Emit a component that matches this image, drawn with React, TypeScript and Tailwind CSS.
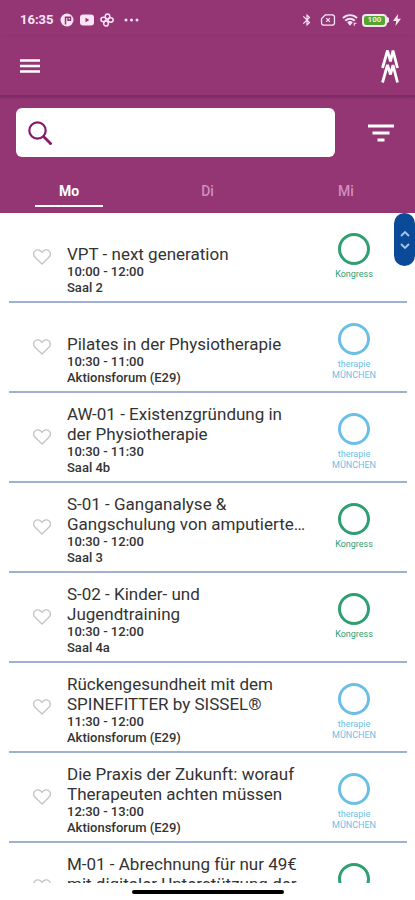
import { useState } from 'react';
import { clsx } from 'clsx';
import { MdBluetooth } from 'react-icons/md';

type Category = 'kongress' | 'therapie';

interface Session {
  title: string;
  time: string;
  room: string;
  category: Category;
}

const days = ['Mo', 'Di', 'Mi'];

const sessions: Session[] = [
  { title: 'VPT - next generation', time: '10:00 - 12:00', room: 'Saal 2', category: 'kongress' },
  { title: 'Pilates in der Physiotherapie', time: '10:30 - 11:00', room: 'Aktionsforum (E29)', category: 'therapie' },
  { title: 'AW-01 - Existenzgründung in der Physiotherapie', time: '10:30 - 11:30', room: 'Saal 4b', category: 'therapie' },
  { title: 'S-01 - Ganganalyse & Gangschulung von amputierte…', time: '10:30 - 12:00', room: 'Saal 3', category: 'kongress' },
  { title: 'S-02 - Kinder- und Jugendtraining', time: '10:30 - 12:00', room: 'Saal 4a', category: 'kongress' },
  { title: 'Rückengesundheit mit dem SPINEFITTER by SISSEL®', time: '11:30 - 12:00', room: 'Aktionsforum (E29)', category: 'therapie' },
  { title: 'Die Praxis der Zukunft: worauf Therapeuten achten müssen', time: '12:30 - 13:00', room: 'Aktionsforum (E29)', category: 'therapie' },
  { title: 'M-01 - Abrechnung für nur 49€ mit digitaler Unterstützung der', time: '12:30 - 13:00', room: 'Saal 1', category: 'kongress' },
];

function StatusBar() {
  return (
    <div className="flex h-9 items-center justify-between pt-1 pr-3.5 pl-5 text-[#fbe4f6]">
      <div className="flex items-center gap-1.5">
        <span className="text-[13px] font-bold">16:35</span>
        <svg viewBox="0 0 14 14" className="size-3.5">
          <circle cx="7" cy="7" r="6.5" fill="currentColor" />
          <path d="M5.500 11.500V4.300h2M8 4.300h2.500v3H8z" fill="none" stroke="#943574" strokeWidth="1.5" />
        </svg>
        <svg viewBox="0 0 14 12" className="h-3 w-3.5">
          <rect y="0.5" width="14" height="11" rx="3" fill="currentColor" />
          <path d="M5.5 3.8v4.4L9.3 6z" fill="#943574" />
        </svg>
        <svg viewBox="0 0 14 14" className="size-3.5" fill="none" stroke="currentColor" strokeWidth="1.5">
          <ellipse cx="7.500" cy="3.500" rx="2.300" ry="2.600" />
          <ellipse cx="10.600" cy="7" rx="2.600" ry="2.200" />
          <ellipse cx="3.500" cy="6.500" rx="2.600" ry="2.200" />
          <ellipse cx="6" cy="10.500" rx="2.300" ry="2.600" />
        </svg>
        <svg viewBox="0 0 16 4" className="ml-1 h-1 w-4" fill="currentColor">
          <circle cx="2" cy="2" r="1.500" />
          <circle cx="7.500" cy="2" r="1.500" />
          <circle cx="13" cy="2" r="1.500" />
        </svg>
      </div>

      <div className="flex items-center gap-1">
        <MdBluetooth className="mr-0.5 size-3.5" />
        <svg viewBox="0 0 16 13" className="mr-0.5 h-3 w-4" fill="none" stroke="currentColor" strokeWidth="1.4">
          <path d="M5 1h8.500L15 2.500v8L13.500 12h-11L1 10.500V5z" strokeLinejoin="round" />
          <path d="M6 4.500l4 4M10 4.500l-4 4" />
        </svg>
        <svg viewBox="0 0 17 14" className="h-3.5 w-4" fill="none" stroke="currentColor" strokeWidth="2">
          <path d="M1 5a10.500 10.500 0 0 1 15 0M3.500 7.800a7 7 0 0 1 10 0" />
          <path d="M5.500 9.500a4.300 4.300 0 0 1 6 0L8.500 13z" fill="currentColor" stroke="none" />
          <path d="M13 13v-2.500h2.500" strokeWidth="1.200" />
        </svg>
        <div className="flex items-center">
          <span className="flex h-[13px] w-[25px] items-center justify-center rounded border-2 border-[#fbe4f6] bg-[#55a630] text-[8px] leading-none font-bold">
            100
          </span>
          <span className="h-1.5 w-0.5 rounded-r-sm bg-[#fbe4f6]" />
        </div>
        <svg viewBox="0 0 8 12" className="h-3 w-2" fill="currentColor">
          <path d="M5 0L0 7h3.200L2.500 12 8 4.800H4.600z" />
        </svg>
      </div>
    </div>
  );
}

function Logo() {
  return (
    <svg viewBox="0 0 20 36" className="h-9 w-5" fill="none" stroke="white" strokeLinejoin="bevel">
      <path d="M2.500 20L7.500 2.500l3 11L13 2.500l4.500 17.500" strokeWidth="2.800" />
      <path d="M2.500 34.500L7.500 17l3 9.500L13 17l4.500 17.500" strokeWidth="2.800" />
    </svg>
  );
}

function SessionRow({ session }: { session: Session }) {
  const isKongress = session.category === 'kongress';

  return (
    <li className="flex h-[90px] border-b-2 border-[#9fb0d2]">
      <button type="button" aria-label="Merken" className="flex w-[58px] shrink-0 items-center pl-6 text-[#c4c4c4]">
        <svg viewBox="0 0 18 16" className="h-4 w-[18px]" fill="none" stroke="currentColor" strokeWidth="1.300">
          <path d="M9 15L2.600 8.800C.3 6.500.3 3.700 1.800 2.100 3.600.3 6.800.4 9 3.300c2.200-2.900 5.400-3 7.200-1.200 1.500 1.600 1.500 4.400-.8 6.700z" />
        </svg>
      </button>

      <div className="flex min-w-0 flex-1 flex-col justify-end pb-[5px] text-[#333]">
        <h2 className="line-clamp-2 text-[17px] leading-5">{session.title}</h2>
        <p className="text-[13px] leading-4 font-medium">{session.time}</p>
        <p className="text-[13px] leading-4 font-medium">{session.room}</p>
      </div>

      <div
        className={clsx(
          'ml-4 flex w-[60px] shrink-0 flex-col items-center pt-5 text-center text-[9px] leading-[11px]',
          isKongress ? 'text-[#2f9e70]' : 'text-[#6bbfe6]'
        )}
      >
        <span className="mb-1 size-8 shrink-0 rounded-full border-3 border-current" />
        {isKongress ? 'Kongress' : 'therapie MÜNCHEN'}
      </div>
      <div className="w-[23px] shrink-0" />
    </li>
  );
}

export default function App() {
  const [activeDay, setActiveDay] = useState('Mo');

  return (
    <div className="flex h-screen flex-col bg-white font-['Roboto',sans-serif]">
      <header className="bg-[#943574] text-white">
        <StatusBar />
        <div className="flex h-[61px] items-center justify-between border-b-2 border-[#7f2b64] pr-[15px] pl-5 shadow-sm">
          <button type="button" aria-label="Menü">
            <svg viewBox="0 0 20 16" className="h-4 w-5" fill="none" stroke="currentColor" strokeWidth="2.500">
              <path d="M0 2.500h20M0 8h20M0 13.500h20" />
            </svg>
          </button>
          <Logo />
        </div>

        <div className="flex items-center gap-8 pt-[11px] pr-5 pl-4">
          <label className="flex h-[49px] flex-1 items-center rounded-md bg-white pl-3 text-[#8a1a6a]">
            <svg viewBox="0 0 24 24" className="size-6" fill="none" stroke="currentColor" strokeWidth="2.200">
              <circle cx="9.500" cy="9.500" r="8.200" />
              <path d="M15.500 15.500l8 8" strokeWidth="2.800" />
            </svg>
            <input type="text" aria-label="Suche" className="min-w-0 flex-1 px-3 text-base text-gray-800 outline-none" />
          </label>
          <button type="button" aria-label="Filter" className="px-px">
            <svg viewBox="0 0 26 20" className="h-5 w-[26px]" fill="none" stroke="currentColor" strokeWidth="3">
              <path d="M0 3h26M4.500 10h17M9.500 17h7" />
            </svg>
          </button>
        </div>

        <nav className="flex h-14 items-end pb-1.5">
          {days.map(day => (
            <button
              key={day}
              type="button"
              onClick={() => setActiveDay(day)}
              className={clsx(
                'mx-[35px] flex-1 border-b-2 pb-1 text-sm leading-5',
                day === activeDay ? 'border-white font-bold' : 'border-transparent font-medium text-[#cf8fbd]'
              )}
            >
              {day}
            </button>
          ))}
        </nav>
      </header>

      <main className="relative min-h-0 flex-1 overflow-hidden">
        <ul className="pr-2 pl-[9px]">
          {sessions.map(session => (
            <SessionRow key={session.title} session={session} />
          ))}
        </ul>

        {/* Fast scroll handle */}
        <button
          type="button"
          aria-label="Blättern"
          className="absolute top-0 right-0 flex h-[53px] w-[21px] items-center justify-center rounded-full bg-[#0b4a98] text-[#a9c6ea]"
        >
          <svg viewBox="0 0 10 18" className="h-[18px] w-2.5" fill="none" stroke="currentColor" strokeWidth="1.800">
            <path d="M1 5l4-4 4 4M1 13l4 4 4-4" />
          </svg>
        </button>
      </main>

      {/* Gesture bar */}
      <div className="flex h-[17px] justify-center pt-[7px]">
        <div className="h-1 w-[152px] rounded-full bg-black" />
      </div>
    </div>
  );
}
